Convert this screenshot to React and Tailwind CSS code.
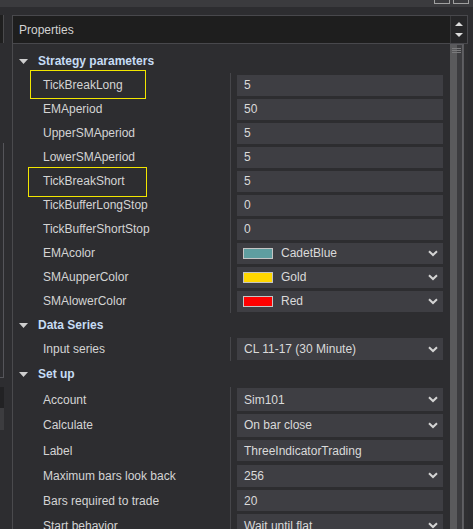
import React from "react";

function Chevron() {
  return (
    <svg width="10" height="7" viewBox="0 0 10 7" className="block">
      <path d="M1 1.2 L5 5 L9 1.2" stroke="#d4d4d4" strokeWidth="2" fill="none" />
    </svg>
  );
}

function Tri() {
  return (
    <svg width="9" height="5" viewBox="0 0 9 5" className="block">
      <polygon points="0,0 9,0 4.5,5" fill="#cfcfcf" />
    </svg>
  );
}

function Category({ label, h = "h-[24px]" }) {
  return (
    <div className={`flex items-center pl-[6px] ${h}`}>
      <Tri />
      <span className="ml-[10px] font-bold text-[#c6dcf4]">{label}</span>
    </div>
  );
}

function Row({ name, value, combo, swatch, hl, h = "h-[24px]", boxH = "h-[21px]" }) {
  return (
    <div className={`flex ${h}`}>
      <div className="relative w-[217px] flex items-center pl-[30px] text-[#d4d4d4] whitespace-nowrap">
        {name}
        {hl === 1 && (
          <div className="absolute left-[17px] top-[-3px] w-[116px] h-[29px] border border-[#f2e600]" />
        )}
        {hl === 2 && (
          <div className="absolute left-[15px] top-[-2px] w-[119px] h-[30px] border border-[#f2e600]" />
        )}
      </div>
      <div className="w-[220px] border-l border-[#46464a] flex items-center pl-[6px] pr-[7px]">
        <div className={`w-[206px] ${boxH} bg-[#3e3e43] flex items-center text-[#dadada] whitespace-nowrap`}>
          {swatch ? (
            <>
              <div className="ml-[6px] w-[30px] h-[11px] border border-[#c4c4c4]" style={{ background: swatch }} />
              <span className="ml-[8px] flex-1">{value}</span>
            </>
          ) : (
            <span className="pl-[7px] flex-1">{value}</span>
          )}
          {combo && (
            <div className="pr-[5px]">
              <Chevron />
            </div>
          )}
        </div>
      </div>
    </div>
  );
}

export default function App() {
  return (
    <div
      className="w-[473px] h-[529px] overflow-hidden bg-[#2d2d30] flex flex-col text-[12px]"
      style={{ fontFamily: '"Liberation Sans", Arial, sans-serif' }}
    >
      {/* top strip */}
      <div className="h-[7px] bg-[#3b3b3e] flex justify-end items-start pr-[4px] shrink-0">
        <div className="w-[16px] h-[4px] border-x border-b border-[#a0a0a0]" />
        <div className="ml-[3px] w-[16px] h-[4px] border-x border-b border-[#a0a0a0]" />
      </div>
      <div className="flex flex-1 pt-[8px]">
        {/* left strip */}
        <div className="w-[12px] flex flex-col shrink-0">
          <div className="w-[4px] h-[28px] bg-[#1f1f1f] border-r border-[#4a4a4c]" />
          <div className="h-[100px]" />
          <div className="w-[4px] h-[235px] border-r border-b border-[#55555a]" />
          <div className="h-[9px]" />
          <div className="w-[4px] h-[21px] bg-[#222224]" />
          <div className="w-[4px] h-[22px] bg-[#3c3c3f]" />
        </div>
        {/* properties panel */}
        <div className="w-[456px] border-l border-[#4a4a4d] flex flex-col">
          <div className="h-[29px] bg-[#1e1e1e] border-t border-b border-r border-[#48484c] flex shrink-0">
            <div className="flex-1 flex items-center pl-[6px] text-[#d2d2d2]">Properties</div>
            <div className="w-[17px] border-l border-[#3a3a3c] bg-[#262628] flex flex-col items-center justify-center gap-[7px]">
              <svg width="8" height="4" viewBox="0 0 8 4"><polygon points="0,4 8,4 4,0" fill="#dcdcdc" /></svg>
              <svg width="8" height="4" viewBox="0 0 8 4"><polygon points="0,0 8,0 4,4" fill="#dcdcdc" /></svg>
            </div>
          </div>
          <div className="flex flex-1">
            <div className="w-[437px] pt-[5px] flex flex-col">
              <Category label="Strategy parameters" />
              <Row name="TickBreakLong" value="5" hl={1} />
              <Row name="EMAperiod" value="50" />
              <Row name="UpperSMAperiod" value="5" />
              <Row name="LowerSMAperiod" value="5" />
              <Row name="TickBreakShort" value="5" hl={2} />
              <Row name="TickBufferLongStop" value="0" />
              <Row name="TickBufferShortStop" value="0" />
              <Row name="EMAcolor" value="CadetBlue" swatch="#5f9ea0" combo />
              <Row name="SMAupperColor" value="Gold" swatch="#ffd700" combo />
              <Row name="SMAlowerColor" value="Red" swatch="#ff0000" combo />
              <Category label="Data Series" />
              <Row name="Input series" value="CL 11-17 (30 Minute)" combo boxH="h-[22px]" />
              <Category label="Set up" h="h-[26px]" />
              <Row name="Account" value="Sim101" combo h="h-[25px]" boxH="h-[23px]" />
              <Row name="Calculate" value="On bar close" combo h="h-[26px]" boxH="h-[23px]" />
              <Row name="Label" value="ThreeIndicatorTrading" h="h-[25px]" />
              <Row name="Maximum bars look back" value="256" combo h="h-[25px]" boxH="h-[22px]" />
              <Row name="Bars required to trade" value="20" h="h-[25px]" />
              <Row name="Start behavior" value="Wait until flat" combo h="h-[25px]" boxH="h-[23px]" />
            </div>
            {/* scrollbar */}
            <div className="w-[14px] flex border-t border-[#5a5a5e] border-r">
              <div className="w-[7px] bg-[#5a5a5c] relative">
                <div className="absolute left-[2px] top-[3px] w-[9px] h-[1px] bg-[#7a7a7c]" />
                <div className="absolute left-[2px] top-[5px] w-[9px] h-[1px] bg-[#7a7a7c]" />
                <div className="absolute left-[2px] top-[7px] w-[9px] h-[1px] bg-[#7a7a7c]" />
              </div>
              <div className="w-[6px] bg-[#3c3c3f]" />
              <div className="w-[1px] bg-[#606063]" />
            </div>
            <div className="flex-1 bg-[#2f2f31]" />
          </div>
        </div>
      </div>
    </div>
  );
}
